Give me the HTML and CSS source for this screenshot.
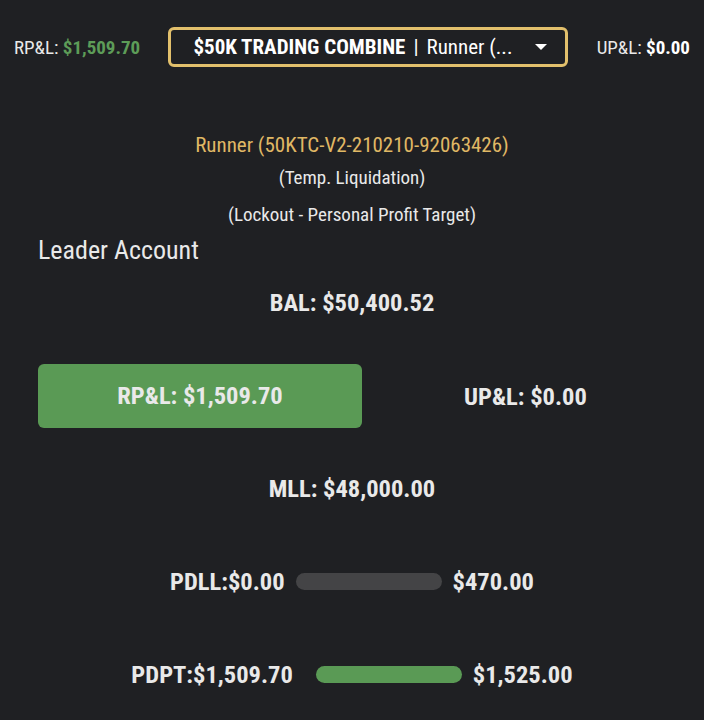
FILE: index.html
```html
<!DOCTYPE html>
<html>
    <head>
        <link rel="stylesheet" href="styles.css">
    </head>
    <body>
        <div id='hd'>
            <div class='pnl'>RP&amp;L: <span class='pos'>$1,509.70</span></div>
            <div class='picker'>
                <span class='acct'>$50K TRADING COMBINE</span>
                <span class='sep'>|</span>
                <span class='sub'>Runner (...</span>
                <span class='caret'></span>
            </div>
            <div class='pnl'>UP&amp;L: <b>$0.00</b></div>
        </div>

        <div id='bd'>
            <p class='runner'>Runner (50KTC-V2-210210-92063426)</p>
            <p class='status'>(Temp. Liquidation)</p>
            <p class='status lock'>(Lockout - Personal Profit Target)</p>
            <h2>Leader Account</h2>

            <div class='stat bal'>BAL: $50,400.52</div>

            <div class='pl'>
                <div class='rpl'>RP&amp;L: $1,509.70</div>
                <div class='upl'>UP&amp;L: $0.00</div>
            </div>

            <div class='stat mll'>MLL: $48,000.00</div>

            <div class='limit pdll'>
                <span>PDLL:$0.00</span>
                <span class='bar'></span>
                <span>$470.00</span>
            </div>

            <div class='limit pdpt'>
                <span>PDPT:$1,509.70</span>
                <span class='bar full'></span>
                <span>$1,525.00</span>
            </div>
        </div>
    </body>
</html>
```

FILE: styles.css
```css
body {
    font-family: Roboto, "Liberation Sans Narrow", sans-serif;
    font-stretch: 75%;
    margin: 0;
    padding: 0;
    color: #e9e9e9;
    background-color: #1f2023;
    height: 720px;
}

#hd {
    display: flex;
    align-items: center;
    justify-content: space-between;
    padding: 27px 14px 0 14px;
}

.pnl { font-size: 19px; }
.pnl .pos { color: #5d9c58; font-weight: bold; }
.pnl b { color: #fff; }

.picker {
    display: flex;
    align-items: center;
    box-sizing: border-box;
    width: 400px;
    height: 40px;
    padding: 0 18px 0 22px;
    border: solid 3px #e2c06c;
    border-radius: 6px;
    font-size: 21px;
    color: #fff;
}
.picker .acct { font-weight: bold; }
.picker .sep { margin: 0 8px; }
.picker .sub { flex: 1; }
.picker .caret {
    width: 0;
    height: 0;
    border-left: 6px solid transparent;
    border-right: 6px solid transparent;
    border-top: 6px solid #fff;
}

#bd {
    text-align: center;
    padding-top: 63px;
}

p { margin: 0; }
.runner { color: #e0b865; font-size: 21px; line-height: 30px; }
.status { font-size: 19px; line-height: 30px; margin-top: 3px; }
.status.lock { margin-top: 7px; }

h2 {
    text-align: left;
    font-weight: normal;
    font-size: 26px;
    line-height: 32px;
    margin: 4px 0 0 38px;
}

.stat { font-size: 24.5px; line-height: 32px; font-weight: bold; }
.bal { margin-top: 21px; }
.mll { margin-top: 45px; }

.pl {
    display: flex;
    align-items: center;
    margin-top: 45px;
    padding-left: 38px;
    font-size: 24.5px;
    font-weight: bold;
}
.rpl {
    width: 324px;
    height: 64px;
    line-height: 64px;
    background-color: #5a9a55;
    border-radius: 6px;
}
.upl { margin-left: 102px; }

.limit {
    display: flex;
    align-items: center;
    justify-content: center;
    gap: 11px;
    height: 32px;
    font-size: 24.5px;
    font-weight: bold;
}
.pdll { margin-top: 60px; }
.pdpt { margin-top: 61px; }
.limit .bar {
    width: 146px;
    height: 17px;
    border-radius: 9px;
    background-color: #444446;
}
.limit .bar.full { background-color: #5a9a55; margin-left: 12px; }
```
